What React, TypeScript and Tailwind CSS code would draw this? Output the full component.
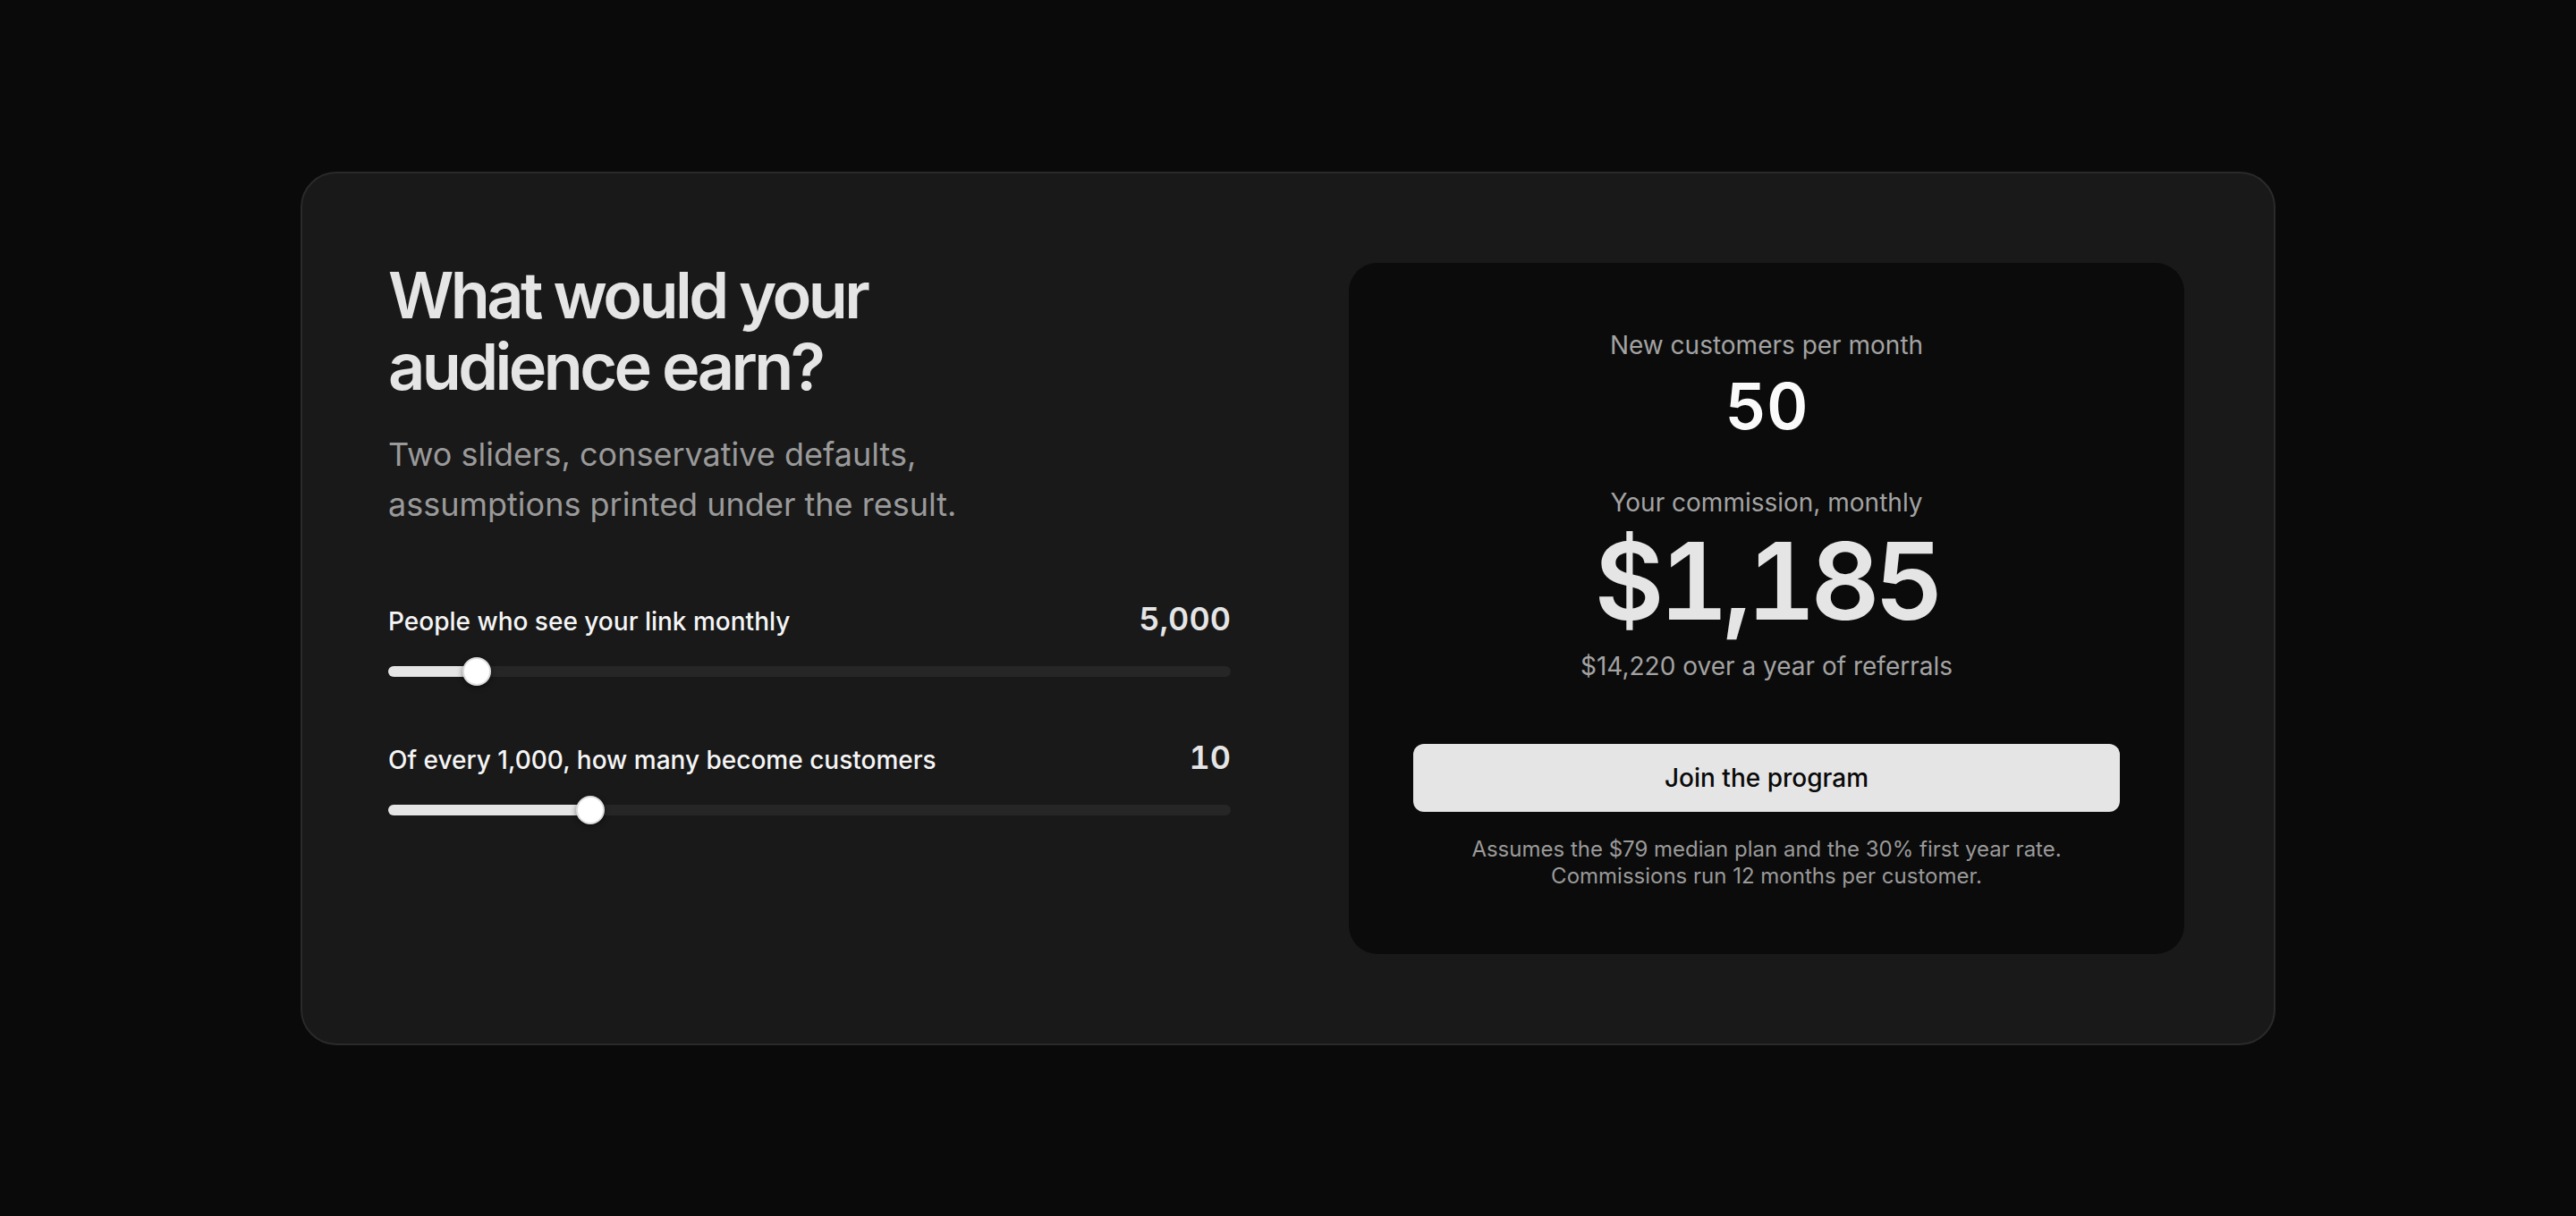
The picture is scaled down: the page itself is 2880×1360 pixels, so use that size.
import React, { useState } from "react";

type RangeFieldProps = {
  label: string;
  value: number;
  min: number;
  max: number;
  step: number;
  onChange: (value: number) => void;
};

const PLAN_PRICE = 79;
const FIRST_YEAR_RATE = 0.3;

const fmt = (n: number) => n.toLocaleString("en-US");

const RangeField = ({ label, value, min, max, step, onChange }: RangeFieldProps) => {
  const ratio = (value - min) / (max - min);
  // thumb is 32px wide, so its centre travels between 16px and (100% - 16px)
  const pos = `calc(16px + (100% - 32px) * ${ratio})`;

  return (
    <div>
      <div className="flex items-baseline justify-between">
        <span className="text-[28px] leading-[40px] font-medium text-[#f5f5f5]">
          {label}
        </span>
        <span className="text-[36px] leading-[40px] font-semibold tabular-nums text-[#e5e5e5]">
          {fmt(value)}
        </span>
      </div>
      <div className="relative mt-5 py-[10px]">
        <div className="h-3 w-full rounded-full bg-[#262626]">
          <div className="h-full rounded-full bg-[#e5e5e5]" style={{ width: pos }} />
        </div>
        <div
          className="pointer-events-none absolute top-0 h-8 w-8 -translate-x-1/2 rounded-full border-2 border-[#dcdcdc] bg-white shadow-[0_2px_6px_rgba(0,0,0,0.45)]"
          style={{ left: pos }}
        />
        <input
          type="range"
          min={min}
          max={max}
          step={step}
          value={value}
          onChange={(e) => onChange(Number(e.target.value))}
          className="absolute inset-0 h-full w-full cursor-pointer opacity-0"
        />
      </div>
    </div>
  );
};

export default function App() {
  const [visitors, setVisitors] = useState(5000);
  const [perThousand, setPerThousand] = useState(10);

  const customers = Math.round((visitors * perThousand) / 1000);
  const monthly = Math.round(customers * PLAN_PRICE * FIRST_YEAR_RATE);
  const yearly = monthly * 12;

  return (
    <div className="flex min-h-screen items-center justify-center bg-[#0a0a0a] font-['Inter',sans-serif]">
      <div className="grid w-[2208px] grid-cols-2 gap-32 rounded-[40px] border-2 border-[#2a2a2a] bg-[#191919] p-24">
        <div>
          <h2 className="max-w-[620px] text-[72px] leading-[80px] font-semibold tracking-tighter text-[#e5e5e5]">
            What would your audience earn?
          </h2>
          <p className="mt-[30px] max-w-[700px] text-[36px] leading-[56px] text-[#9a9a9a]">
            Two sliders, conservative defaults, assumptions printed under the result.
          </p>

          <div className="mt-[80px] flex flex-col gap-[60px]">
            <RangeField
              label="People who see your link monthly"
              value={visitors}
              min={500}
              max={50000}
              step={500}
              onChange={setVisitors}
            />
            <RangeField
              label="Of every 1,000, how many become customers"
              value={perThousand}
              min={1}
              max={40}
              step={1}
              onChange={setPerThousand}
            />
          </div>
        </div>

        <div className="m-1 flex flex-col items-center rounded-[32px] bg-[#0b0b0b] px-[72px] py-[72px] text-center">
          <span className="text-[28px] leading-[40px] text-[#a3a3a3]">New customers per month</span>
          <span className="mt-[8px] text-[72px] leading-[80px] font-semibold tabular-nums text-[#fafafa]">
            {fmt(customers)}
          </span>

          <span className="mt-12 text-[28px] leading-[40px] text-[#a3a3a3]">
            Your commission, monthly
          </span>
          <span className="mt-[8px] text-[120px] leading-[120px] font-semibold tabular-nums tracking-tighter text-[#e5e5e5]">
            ${fmt(monthly)}
          </span>
          <span className="mt-[14px] text-[28px] leading-[42px] text-[#a3a3a3]">
            ${fmt(yearly)} over a year of referrals
          </span>

          <button className="mt-[66px] h-[76px] w-full rounded-[12px] bg-[#e5e5e5] text-[28px] font-medium text-[#0a0a0a]">
            Join the program
          </button>

          <p className="mt-[27px] text-[24px] leading-[30px] text-[#9a9a9a]">
            Assumes the ${PLAN_PRICE} median plan and the {FIRST_YEAR_RATE * 100}% first year rate.
            <br />
            Commissions run 12 months per customer.
          </p>
        </div>
      </div>
    </div>
  );
}
